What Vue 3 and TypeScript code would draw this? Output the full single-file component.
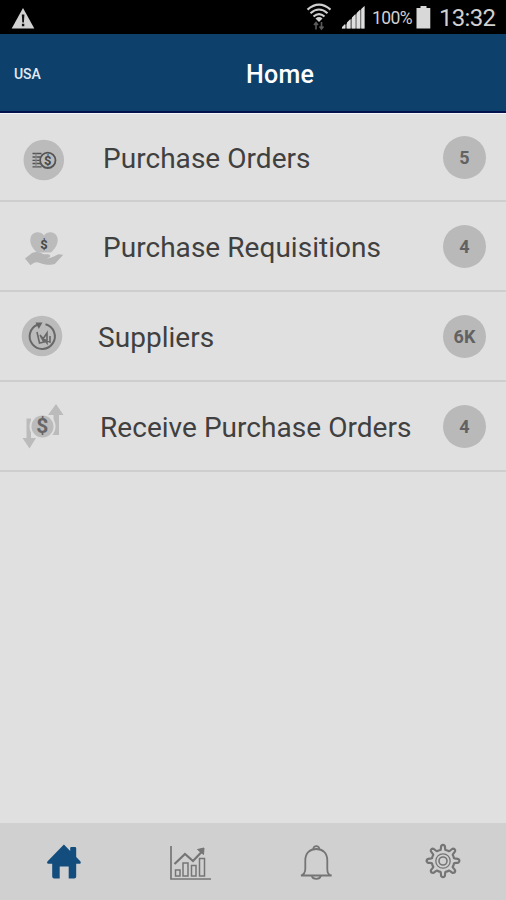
<script setup lang="ts">
interface Row {
  icon: 'coins' | 'hand' | 'supplier' | 'exchange'
  label: string
  count: string
}

const rows: Row[] = [
  { icon: 'coins', label: 'Purchase Orders', count: '5' },
  { icon: 'hand', label: 'Purchase Requisitions', count: '4' },
  { icon: 'supplier', label: 'Suppliers', count: '6K' },
  { icon: 'exchange', label: 'Receive Purchase Orders', count: '4' },
]
</script>

<template>
  <div class="screen">
    <div class="status">
      <svg class="warn" width="24" height="22" viewBox="0 0 24 22">
        <path d="M12 1 L23.3 21.5 H0.7 Z" fill="#d2d2d2" />
        <path d="M10.8 7.5h2.6l-.5 8h-1.6zM10.9 16.8h2.4v2.4h-2.4z" fill="#111" />
      </svg>
      <svg class="wifi" width="26" height="28" viewBox="0 0 26 28">
        <g fill="none" stroke="#cfcfcf" stroke-width="2.1">
          <path d="M1.5 6.6 Q13 -3.2 24.5 6.6" />
          <path d="M4.5 10.2 Q13 2.8 21.5 10.2" />
          <path d="M7.5 13.5 Q13 8.7 18.5 13.5" />
        </g>
        <path d="M9.500 15.500 Q13 12.600 16.500 15.500 L13 19z" fill="#cfcfcf" />
        <path d="M10 26.500v-7M8 22l2-2.500 2 2.500M15.500 19v7M13.500 23.500l2 2.500 2-2.500" fill="none" stroke="#5a5a5a" stroke-width="1.600" />
      </svg>
      <svg class="signal" width="24" height="23" viewBox="0 0 24 23">
        <path d="M0.500 22.500 23.500 0v22.500z" fill="#777" />
        <path d="M1 22.500v-1.500l3-3v4.500zM6 22.500v-6l3.400-3.400v9.400zM11 22.500V11.500l3.400-3.400v14.400zM15.700 22.500V7L19 3.800v18.700zM20.300 22.500V3l3.200-3v22.500z" fill="#dedede" />
      </svg>
      <span class="percent">100%</span>
      <svg class="battery" width="15" height="23" viewBox="0 0 15 23">
        <path d="M4.500 0h6v2h3.800v20.500H.5V2h4z" fill="#d8d8d8" />
      </svg>
      <span class="clock">13:32</span>
    </div>

    <header class="header">
      <span class="country">USA</span>
      <h1 class="title">Home</h1>
    </header>

    <main class="list">
      <div v-for="row in rows" :key="row.label" class="row" :class="row.icon">
        <svg class="icon" width="70" height="88" viewBox="0 0 70 88">
          <g v-if="row.icon === 'coins'" transform="translate(0 17)">
            <circle cx="33.800" cy="30" r="20.300" fill="#bbb" />
            <g fill="none" stroke="#555" stroke-width="1.300">
              <path d="M22.500 23.500h9M22.500 27h7.500M22.500 30.300h7M22.500 33.500h7.500M22.500 36.800h9" />
              <path d="M26 23.500v13.300" stroke="#888" />
              <circle cx="37.800" cy="30.300" r="7.700" stroke-width="1.800" />
            </g>
            <text x="37.800" y="35" class="coin-sign">$</text>
          </g>
          <g v-else-if="row.icon === 'hand'" transform="translate(0 18)">
            <path d="M34 32.500H27C22 28 19.500 23 20.500 18c1.200-6 9.500-8 13.500-2.500 4-5.500 12.300-3.500 13.500 2.500 1 5-1.500 10-6.500 14.500z" fill="#bbb" />
            <path d="M15 38.500 22 33c4-2 8-1 11 1 3 .5 6-.5 7 1.200.8 1.600-1 3-4 3 4 .8 9-2.500 12-3.700 2.500-.8 3.500 1 5.500 0L45 43.700c-4 2-11 1-15-.7-4-1.500-6-.5-9.500 2.200z" fill="#b5b5b5" />
            <text x="34" y="29" class="heart-sign">$</text>
          </g>
          <g v-else-if="row.icon === 'supplier'" transform="translate(0 16)">
            <circle cx="32" cy="28" r="20.300" fill="#bbb" />
            <g fill="none" stroke="#686868">
              <path d="M35.500 16.200a12.600 12.600 0 1 1-8 .5" stroke-width="2" />
              <path d="M27 24 29.500 35 34 34 30 27M30 27l7 8V25l-4 6 7 3v-6" stroke-width="1.600" />
            </g>
            <path d="M25.500 14.500h7l-3.700 6.500z" fill="#666" />
          </g>
          <g v-else transform="translate(0 15)">
            <path d="M16.500 21.500h4.500V41h5l-6.500 10.500L12.500 41h4zM40.500 38H49V18h4.500L46 7 38 18h5.500v12z" fill="#bbb" />
            <circle cx="32.500" cy="29.500" r="13" fill="#dfdfdf" />
            <circle cx="32.500" cy="29.500" r="11" fill="#bbb" />
            <text x="32.300" y="36.200" class="round-sign">$</text>
          </g>
        </svg>
        <span class="label">{{ row.label }}</span>
        <span class="badge">{{ row.count }}</span>
      </div>
    </main>

    <nav class="tabs">
      <a class="tab">
        <svg width="44" height="44" viewBox="0 0 44 44">
          <path d="M22.900 4.500 29.200 11V8.200q0-1.200 1.200-1.200h3.600q1.200 0 1.200 1.200V17l4.300 4.500q.8 1.200-.3 2.300H35.200V36.500q0 2-2 2h-5.500V26.500h-9v12h-5.500q-2 0-2-2V23.800H6.700q-1.200-1.200-.3-2.300z" fill="#134d7d" />
        </svg>
      </a>
      <a class="tab">
        <svg width="44" height="44" viewBox="0 0 44 44" fill="none" stroke="#757575">
          <path d="M3 6v33h40" stroke-width="1.700" />
          <path d="M6.500 24 17 14l8 7 9.500-10" stroke-width="2.200" />
          <path d="M29.500 9.500l6.500-1.500-.5 6.500z" fill="#757575" />
          <path d="M7.500 30h4.500v6H7.500zM15 23h5v13h-5zM23.500 25.500h4.500V36h-4.500zM31.500 18.500h5V36h-5z" stroke-width="1.500" />
        </svg>
      </a>
      <a class="tab">
        <svg width="44" height="44" viewBox="0 0 44 44" fill="none" stroke="#757575" stroke-width="1.800">
          <path d="M7 35.500c3.500-1 4.300-3 4.300-7V20.500C11.300 13 16 9 22.300 9s11 4 11 11.500v8c0 4 .5 6 4.300 7z" />
          <path d="M19.300 9.300c-.3-4.300 6.300-4.300 6 0M17.800 35.800c1 4.200 8 4.200 9 0" />
        </svg>
      </a>
      <a class="tab">
        <svg width="44" height="44" viewBox="0 0 44 44" fill="none" stroke="#757575" stroke-linejoin="round">
          <path d="M19.500 10c.7-1 .2-3 .8-4.300q1.700-1.700 3.400 0c.6 1.300.1 3.300.8 4.300q2 .3 3.600 1.200c1.200-.3 2.300-2.100 3.700-2.500q2.400-.1 2.400 2.300c-.4 1.400-2.200 2.500-2.500 3.700q1 1.700 1.300 3.500c1 .7 3.200.2 4.500.9q1.700 1.700 0 3.400c-1.300.7-3.500.2-4.500.9q-.3 1.900-1.300 3.500c.3 1.200 2.100 2.300 2.500 3.700q0 2.400-2.400 2.400c-1.400-.4-2.500-2.200-3.700-2.500q-1.600 1-3.600 1.300c-.7 1-.2 3-.8 4.400q-1.700 1.700-3.400 0c-.6-1.400-.1-3.400-.8-4.400q-2-.3-3.600-1.300c-1.200.3-2.300 2.100-3.700 2.500q-2.400 0-2.400-2.400c.4-1.400 2.200-2.500 2.500-3.700q-1-1.600-1.300-3.500c-1-.7-3.200-.2-4.500-.9q-1.700-1.700 0-3.400c1.300-.7 3.500-.2 4.500-.9q.3-1.800 1.300-3.500c-.3-1.200-2.100-2.300-2.500-3.700q0-2.400 2.400-2.300c1.400.4 2.500 2.200 3.700 2.500q1.600-.9 3.600-1.200z" stroke-width="2.200" />
          <circle cx="22" cy="21" r="7.200" stroke-width="1.300" />
          <circle cx="22" cy="21" r="4" stroke-width="1.600" />
        </svg>
      </a>
    </nav>
  </div>
</template>

<style>
body {
  margin: 0;
}
</style>

<style scoped>
.screen {
  width: 506px;
  height: 900px;
  display: flex;
  flex-direction: column;
  background: #e0e0e0;
  font-family: Roboto, "Liberation Sans", sans-serif;
  overflow: hidden;
}
.status {
  height: 34px;
  flex: none;
  display: flex;
  align-items: flex-start;
  background: #000;
  color: #d0d0d0;
  box-sizing: border-box;
  padding-left: 11px;
}
.warn {
  margin-top: 7px;
}
.wifi {
  margin: 3px 0 0 271px;
}
.signal {
  margin: 6px 0 0 9px;
}
.percent {
  width: 42px;
  margin: 8px 0 0 7px;
  font-size: 17.5px;
  line-height: 21px;
  letter-spacing: -0.6px;
  white-space: nowrap;
}
.battery {
  margin: 6px 0 0 2px;
}
.clock {
  margin: 4px 0 0 8px;
  font-size: 24px;
  line-height: 28px;
  letter-spacing: -0.7px;
}
.header {
  height: 79px;
  flex: none;
  box-sizing: border-box;
  display: flex;
  align-items: center;
  padding: 5px 0 0 14px;
  background: #0d406b;
  border-bottom: 2px solid #04124e;
  color: #fff;
}
.country {
  width: 232px;
  font-size: 14px;
  letter-spacing: -0.1px;
  font-weight: 500;
  color: #e4eaf3;
  line-height: 18px;
  padding-bottom: 2px;
}
.title {
  margin: 0;
  font-size: 25px;
  line-height: 30px;
  font-weight: 500;
  letter-spacing: 0.3px;
}
.list {
  flex: 1;
  border-top: 1px solid #f5f4f8;
}
.row {
  height: 90px;
  box-sizing: border-box;
  display: flex;
  align-items: center;
  padding: 0 20px 0 10px;
  border-bottom: 2px solid #cecece;
}
.row:first-child {
  height: 88px;
}
.icon {
  flex: none;
}
.label {
  flex: 1;
  padding: 3px 0 0 23px;
  font-size: 28px;
  line-height: 34px;
  letter-spacing: 0.04px;
  color: #404040;
  white-space: nowrap;
}
.supplier .label {
  padding-left: 18px;
}
.exchange .label {
  padding-left: 20px;
}
.badge {
  width: 43px;
  height: 43px;
  flex: none;
  border-radius: 50%;
  background: #b9b9b9;
  color: #626262;
  font-size: 18px;
  font-weight: 700;
  line-height: 43px;
  text-align: center;
}
.coin-sign,
.heart-sign,
.round-sign {
  font-weight: 700;
  fill: #484848;
  text-anchor: middle;
}
.coin-sign {
  font-size: 13px;
}
.heart-sign {
  font-size: 13px;
}
.round-sign {
  font-size: 21px;
  fill: #666;
}
.tabs {
  height: 77px;
  flex: none;
  display: grid;
  grid-template-columns: repeat(4, 1fr);
  background: #d0d0d0;
}
.tab {
  display: flex;
  align-items: center;
  justify-content: center;
}
</style>
